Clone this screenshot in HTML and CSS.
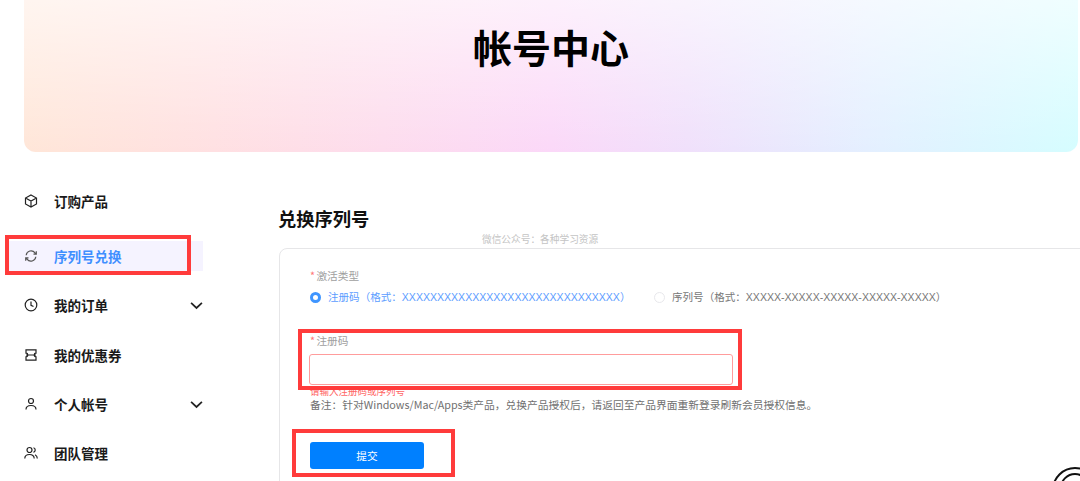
FILE: index.html
```html
<!DOCTYPE html>
<html lang="zh">
<head>
<meta charset="utf-8">
<title>帐号中心</title>
<link rel="stylesheet" href="styles.css">
</head>
<body>
<div class="page">
  <header class="banner"><h1>帐号中心</h1></header>
  <div class="content">
    <nav class="side">
      <a class="item first"><svg class="ico" viewBox="0 0 14 14"><path d="M7 1 12.500 4v6L7 13 1.500 10V4zM1.500 4 7 7l5.500-3M7 7v6"/></svg><span>订购产品</span></a>
      <a class="item active"><svg class="ico" viewBox="0 0 14 14"><path d="M2.200 6.200A4.900 4.900 0 0 1 11 3.800L12 5M11.800 7.800A4.900 4.900 0 0 1 3 10.200L2 9M12.300 2.300V5.200H9.500M1.700 11.700V8.800H4.500"/></svg><span>序列号兑换</span></a>
      <a class="item"><svg class="ico" viewBox="0 0 14 14"><circle cx="7" cy="7" r="5.800"/><path d="M7 3.500V7.300L9.500 8.500"/></svg><span>我的订单</span><svg class="chev" viewBox="0 0 12 8"><path d="M1 1.500 6 6.300 11 1.500"/></svg></a>
      <a class="item"><svg class="ico" viewBox="0 0 14 14"><path d="M2 1.800H12V5.200A1.800 1.800 0 0 0 12 8.800V12.200H2V8.800A1.800 1.800 0 0 0 2 5.200ZM2 7H12"/></svg><span>我的优惠券</span></a>
      <a class="item"><svg class="ico" viewBox="0 0 14 14"><circle cx="7" cy="4" r="2.500"/><path d="M2 12.500C2 9.800 4.200 8.500 7 8.500S12 9.800 12 12.500"/></svg><span>个人帐号</span><svg class="chev" viewBox="0 0 12 8"><path d="M1 1.500 6 6.300 11 1.500"/></svg></a>
      <a class="item"><svg class="ico" viewBox="0 0 14 14"><circle cx="5.500" cy="4" r="2.500"/><path d="M.8 12.500C.8 9.800 2.800 8.500 5.500 8.500S10.200 9.800 10.200 12.500M9.500 1.700A2.400 2.400 0 0 1 9.500 6.300M11 8.800C12.400 9.400 13.300 10.600 13.300 12.500"/></svg><span>团队管理</span></a>
    </nav>
    <main class="main">
      <h2>兑换序列号</h2>
      <section class="card">
        <div class="label"><i>*</i> 激活类型</div>
        <div class="radios">
          <label class="radio on"><b class="dot"></b>注册码（格式：XXXXXXXXXXXXXXXXXXXXXXXXXXXXXXX）</label>
          <label class="radio"><b class="dot"></b>序列号（格式：XXXXX-XXXXX-XXXXX-XXXXX-XXXXX）</label>
        </div>
        <div class="label second"><i>*</i> 注册码</div>
        <div class="input"></div>
        <div class="error">请输入注册码或序列号</div>
        <div class="note">备注：针对Windows/Mac/Apps类产品，兑换产品授权后，请返回至产品界面重新登录刷新会员授权信息。</div>
        <button class="submit">提交</button>
      </section>
    </main>
  </div>
  <div class="watermark">微信公众号：各种学习资源</div>
  <div class="mark mark-nav"></div>
  <div class="mark mark-input"></div>
  <div class="mark mark-btn"></div>
  <svg class="logo" viewBox="0 0 30 15"><circle cx="25" cy="24" r="22"/><circle cx="25" cy="22" r="14"/></svg>
</div>
</body>
</html>
```
FILE: styles.css
```css
* { box-sizing: border-box; }
html, body { margin: 0; padding: 0; background: #fff; }
body { font-family: "Noto Sans CJK SC", "Noto Sans", sans-serif; color: #111; }
.page { position: relative; width: 1080px; height: 481px; overflow: hidden; }

.banner {
  height: 152px;
  margin: 0 2px 0 24px;
  border-radius: 0 0 12px 12px;
  background:
    linear-gradient(180deg, rgba(255,255,255,.62) 0%, rgba(255,255,255,0) 100%),
    linear-gradient(90deg, #ffe6d8 0%, #ffe0e2 18%, #fbd8f8 50%, #f0e0fb 63%, #e4efff 80%, #d5fdff 100%);
  text-align: center;
  padding-top: 17px;
}
.banner h1 { margin: 0; font-size: 39px; line-height: 58px; font-weight: 700; color: #000; }

.content { display: flex; align-items: flex-start; }
.side { width: 279px; flex: none; padding: 34px 76px 0 9px; display: flex; flex-direction: column; gap: 19.400px; }
.item { display: flex; align-items: center; height: 30px; padding-left: 15px; font-size: 13.500px; font-weight: 700; color: #1a1a1a; }
.item.first { margin-bottom: 5.500px; }
.item.active { background: #f5f3ff; color: #3f8fff; }
.ico { width: 14px; height: 14px; margin-right: 16px; flex: none; fill: none; stroke: #222; stroke-width: 1.200; }
.active .ico { stroke: #555; }
.chev { width: 13px; height: 9px; margin-left: auto; flex: none; fill: none; stroke: #222; stroke-width: 1.600; }

.main { flex: 1; min-width: 0; padding-top: 52px; }
h2 { margin: 0 0 0 -1px; font-size: 18.300px; line-height: 28px; font-weight: 700; color: #111; }
.card { width: 830px; height: 300px; margin-top: 16px; border: 1px solid #e6e6e8; border-radius: 8px; padding: 20px 0 0 30px; font-size: 10.700px; color: #777; }
.label { line-height: 14px; color: #a0a0a0; word-spacing: -1px; }
.label i { color: #f77; font-style: normal; }
.radios { display: flex; margin-top: 7px; line-height: 14px; font-size: 10.550px; font-family: "Liberation Sans", "Noto Sans CJK SC", sans-serif; }
.radio { display: flex; align-items: center; }
.radio.on { color: #5c9dff; width: 344px; }
.dot { width: 11px; height: 11px; border-radius: 50%; border: 1px solid #e8e8ec; margin-right: 7px; flex: none; background: #fff; }
.on .dot { border: 3px solid #3f95ff; }
.second { margin-top: 30px; }
.input { width: 424px; height: 31px; margin: 6px 0 0 -1px; border: 1px solid #ff9c9c; border-radius: 3px; background: #fff; }
.error { font-size: 9.500px; line-height: 12px; margin-top: 0; color: #f66; height: 13px; }
.note { font-size: 10.750px; line-height: 14px; color: #707070; white-space: nowrap; }
.submit { display: block; width: 114px; height: 27px; margin-top: 30px; border: 0; border-radius: 3px; background: #0080ff; color: #fff; font: inherit; font-size: 10.700px; }

.watermark { position: absolute; left: 482px; top: 232px; font-size: 9.700px; line-height: 14px; color: #c4c4c4; background: #fff; }
.mark { position: absolute; border: 4px solid #ff3b3b; }
.mark-nav { left: 5px; top: 235px; width: 186px; height: 40px; }
.mark-input { left: 298px; top: 329px; width: 444px; height: 61px; }
.mark-btn { left: 292px; top: 429px; width: 163px; height: 48px; }
.logo { position: absolute; left: 1050px; top: 466px; width: 30px; height: 15px; fill: none; stroke: #111; stroke-width: 2; }
```
